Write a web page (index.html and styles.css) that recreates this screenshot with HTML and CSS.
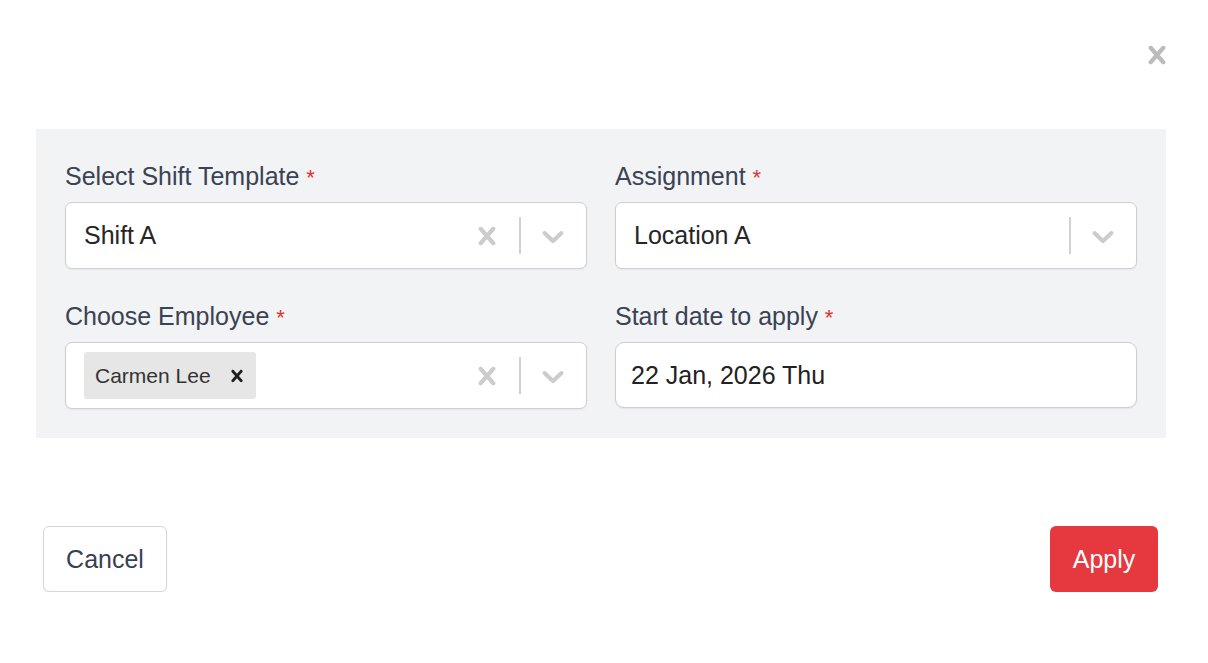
FILE: index.html
```html
<!DOCTYPE html>
<html lang="en">
<head>
<meta charset="utf-8">
<title>Apply Shift</title>
<link rel="stylesheet" href="styles.css">
</head>
<body>
<div class="modal">
  <div class="modal-header">
    <button class="close-btn" aria-label="Close">
      <svg viewBox="0 0 20 20" width="36" height="36"><path d="M14.348 14.849c-0.469 0.469-1.229 0.469-1.697 0l-2.651-3.030-2.651 3.029c-0.469 0.469-1.229 0.469-1.697 0-0.469-0.469-0.469-1.229 0-1.697l2.758-3.15-2.759-3.152c-0.469-0.469-0.469-1.228 0-1.697s1.228-0.469 1.697 0l2.652 3.031 2.651-3.031c0.469-0.469 1.228-0.469 1.697 0s0.469 1.229 0 1.697l-2.758 3.152 2.758 3.15c0.469 0.469 0.469 1.229 0 1.698z"/></svg>
    </button>
  </div>

  <div class="panel">
    <div class="field-group">
      <label class="label">Select Shift Template <span class="req">*</span></label>
      <div class="select">
        <div class="value">Shift A</div>
        <div class="indicators">
          <span class="ind clear">
            <svg viewBox="0 0 20 20" width="36" height="36"><path d="M14.348 14.849c-0.469 0.469-1.229 0.469-1.697 0l-2.651-3.030-2.651 3.029c-0.469 0.469-1.229 0.469-1.697 0-0.469-0.469-0.469-1.229 0-1.697l2.758-3.15-2.759-3.152c-0.469-0.469-0.469-1.228 0-1.697s1.228-0.469 1.697 0l2.652 3.031 2.651-3.031c0.469-0.469 1.228-0.469 1.697 0s0.469 1.229 0 1.697l-2.758 3.152 2.758 3.15c0.469 0.469 0.469 1.229 0 1.698z"/></svg>
          </span>
          <span class="sep"></span>
          <span class="ind">
            <svg viewBox="0 0 20 20" width="36" height="36"><path d="M4.516 7.548c0.436-0.446 1.043-0.481 1.576 0l3.908 3.747 3.908-3.747c0.533-0.481 1.141-0.446 1.574 0 0.436 0.445 0.408 1.197 0 1.615-0.406 0.418-4.695 4.502-4.695 4.502-0.217 0.223-0.502 0.335-0.787 0.335s-0.57-0.112-0.789-0.335c0 0-4.287-4.084-4.695-4.502s-0.436-1.17 0-1.615z"/></svg>
          </span>
        </div>
      </div>
    </div>

    <div class="field-group">
      <label class="label">Assignment <span class="req">*</span></label>
      <div class="select">
        <div class="value">Location A</div>
        <div class="indicators">
          <span class="sep"></span>
          <span class="ind">
            <svg viewBox="0 0 20 20" width="36" height="36"><path d="M4.516 7.548c0.436-0.446 1.043-0.481 1.576 0l3.908 3.747 3.908-3.747c0.533-0.481 1.141-0.446 1.574 0 0.436 0.445 0.408 1.197 0 1.615-0.406 0.418-4.695 4.502-4.695 4.502-0.217 0.223-0.502 0.335-0.787 0.335s-0.57-0.112-0.789-0.335c0 0-4.287-4.084-4.695-4.502s-0.436-1.17 0-1.615z"/></svg>
          </span>
        </div>
      </div>
    </div>

    <div class="field-group">
      <label class="label">Choose Employee <span class="req">*</span></label>
      <div class="select">
        <div class="value">
          <span class="chip">
            <span class="chip-label">Carmen Lee</span>
            <span class="chip-remove">
              <svg viewBox="0 0 20 20" width="24" height="24"><path d="M14.348 14.849c-0.469 0.469-1.229 0.469-1.697 0l-2.651-3.030-2.651 3.029c-0.469 0.469-1.229 0.469-1.697 0-0.469-0.469-0.469-1.229 0-1.697l2.758-3.15-2.759-3.152c-0.469-0.469-0.469-1.228 0-1.697s1.228-0.469 1.697 0l2.652 3.031 2.651-3.031c0.469-0.469 1.228-0.469 1.697 0s0.469 1.229 0 1.697l-2.758 3.152 2.758 3.15c0.469 0.469 0.469 1.229 0 1.698z"/></svg>
            </span>
          </span>
        </div>
        <div class="indicators">
          <span class="ind clear">
            <svg viewBox="0 0 20 20" width="36" height="36"><path d="M14.348 14.849c-0.469 0.469-1.229 0.469-1.697 0l-2.651-3.030-2.651 3.029c-0.469 0.469-1.229 0.469-1.697 0-0.469-0.469-0.469-1.229 0-1.697l2.758-3.15-2.759-3.152c-0.469-0.469-0.469-1.228 0-1.697s1.228-0.469 1.697 0l2.652 3.031 2.651-3.031c0.469-0.469 1.228-0.469 1.697 0s0.469 1.229 0 1.697l-2.758 3.152 2.758 3.15c0.469 0.469 0.469 1.229 0 1.698z"/></svg>
          </span>
          <span class="sep"></span>
          <span class="ind">
            <svg viewBox="0 0 20 20" width="36" height="36"><path d="M4.516 7.548c0.436-0.446 1.043-0.481 1.576 0l3.908 3.747 3.908-3.747c0.533-0.481 1.141-0.446 1.574 0 0.436 0.445 0.408 1.197 0 1.615-0.406 0.418-4.695 4.502-4.695 4.502-0.217 0.223-0.502 0.335-0.787 0.335s-0.57-0.112-0.789-0.335c0 0-4.287-4.084-4.695-4.502s-0.436-1.17 0-1.615z"/></svg>
          </span>
        </div>
      </div>
    </div>

    <div class="field-group">
      <label class="label">Start date to apply <span class="req">*</span></label>
      <div class="date-input">22 Jan, 2026 Thu</div>
    </div>
  </div>

  <div class="footer">
    <button class="btn btn-cancel">Cancel</button>
    <button class="btn btn-apply">Apply</button>
  </div>
</div>
</body>
</html>
```

FILE: styles.css
```css
* { box-sizing: border-box; }

html, body {
  margin: 0;
  padding: 0;
  background: #ffffff;
}

body {
  font-family: "Liberation Sans", Arial, Helvetica, sans-serif;
  color: #2b2b2b;
}

.modal {
  padding: 37px 42px 0 36px;
}

.modal-header {
  display: flex;
  justify-content: flex-end;
  height: 92px;
}

.close-btn {
  width: 36px;
  height: 36px;
  margin-right: -9px;
  padding: 0;
  border: 0;
  background: transparent;
  fill: #bbbbbb;
  display: flex;
  align-items: center;
  justify-content: center;
  cursor: pointer;
}

.close-btn svg { display: block; }

.panel {
  background: #f2f3f5;
  padding: 29px;
  display: grid;
  grid-template-columns: 1fr 1fr;
  column-gap: 28px;
  row-gap: 29px;
}

.field-group {
  display: flex;
  flex-direction: column;
}

.label {
  display: block;
  height: 36px;
  font-size: 25px;
  line-height: 36px;
  color: #3a4253;
  margin-bottom: 8px;
  white-space: nowrap;
}

.req {
  color: #e5322d;
  font-size: 22px;
  line-height: 1;
}

.select {
  height: 67px;
  background: #ffffff;
  border: 1px solid #cfcfd2;
  border-radius: 7px;
  box-shadow: 0 1px 2px rgba(0, 0, 0, 0.06);
  display: flex;
  align-items: center;
}

.value {
  flex: 1;
  padding-left: 18px;
  font-size: 25px;
  color: #262626;
  display: flex;
  align-items: center;
}

.indicators {
  display: flex;
  align-items: center;
  align-self: stretch;
  padding-right: 13px;
}

.ind {
  width: 40px;
  display: flex;
  align-items: center;
  justify-content: center;
  fill: #cccccc;
}

.ind svg { display: block; }

.clear { margin-right: 12px; }

.sep {
  width: 2px;
  height: 37px;
  background: #d2d2d2;
  margin-right: 12px;
}

.chip {
  display: inline-flex;
  align-items: center;
  height: 47px;
  background: #e6e6e6;
  border-radius: 3px;
}

.chip-label {
  font-size: 21px;
  color: #333333;
  padding-left: 11px;
  padding-right: 7px;
}

.chip-remove {
  width: 38px;
  height: 47px;
  display: flex;
  align-items: center;
  justify-content: center;
  fill: #1f1f1f;
}

.chip-remove svg { display: block; }

.date-input {
  height: 66px;
  background: #ffffff;
  border: 1px solid #cfcfd2;
  border-radius: 9px;
  box-shadow: 0 1px 2px rgba(0, 0, 0, 0.06);
  display: flex;
  align-items: center;
  padding-left: 15px;
  font-size: 25px;
  color: #222222;
}

.footer {
  display: flex;
  justify-content: space-between;
  align-items: center;
  margin-top: 88px;
  padding: 0 8px 0 7px;
}

.btn {
  height: 66px;
  font-family: "Liberation Sans", Arial, Helvetica, sans-serif;
  font-size: 25px;
  border-radius: 6px;
  cursor: pointer;
}

.btn-cancel {
  width: 124px;
  background: #ffffff;
  color: #374151;
  border: 1px solid #d4d6dc;
  box-shadow: 0 1px 2px rgba(0, 0, 0, 0.06);
}

.btn-apply {
  width: 108px;
  background: #e5383f;
  color: #ffffff;
  border: 0;
}
```
